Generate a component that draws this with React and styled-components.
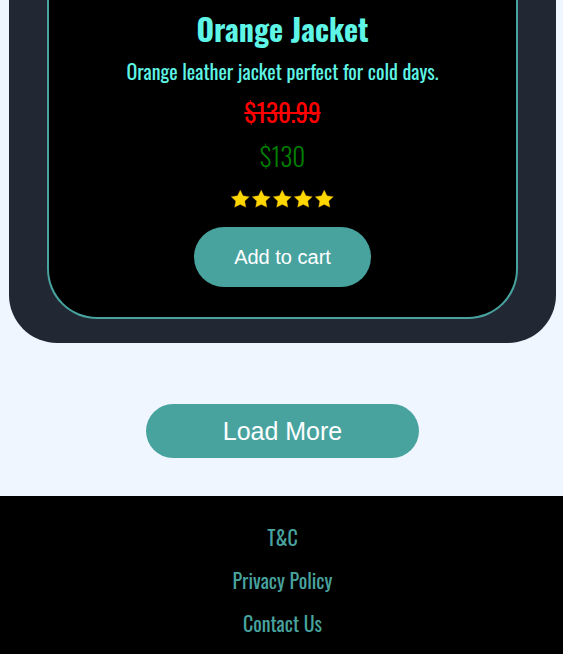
import React from "react";
import styled, { createGlobalStyle } from "styled-components";

const GlobalStyle = createGlobalStyle`
  body {
    margin: 0;
    background: #eff6ff;
    font-family: "Liberation Sans", Arial, sans-serif;
  }
`;

const condensed = `"Oswald", "Liberation Sans Narrow", "DejaVu Sans Condensed", sans-serif`;

const Page = styled.div`
  display: flex;
  flex-direction: column;
  min-height: 654px;
`;

const Shelf = styled.section`
  margin: 0 7px 0 9px;
  padding: 0 38px 24px;
  background: #212833;
  border-radius: 0 0 48px 48px;
`;

const Card = styled.article`
  display: flex;
  flex-direction: column;
  align-items: center;
  background: #000;
  border: 2px solid #48a39f;
  border-top: none;
  border-radius: 0 0 50px 50px;
  padding: 7px 0 30px;
  font-family: ${condensed};
`;

const Title = styled.h2`
  margin: 0;
  font-size: 30px;
  line-height: 44px;
  font-weight: 700;
  color: #5ef5e6;
`;

const Desc = styled.p`
  margin: 5px 0 0;
  font-size: 20px;
  line-height: 30px;
  color: #5ef5e6;
`;

const Price = styled.div`
  margin-top: ${(p) => p.$gap}px;
  font-size: 25px;
  line-height: 37px;
  font-weight: ${(p) => (p.$old ? 400 : 300)};
  color: ${(p) => p.$color};
  text-decoration: ${(p) => (p.$old ? "line-through" : "none")};
`;

const Stars = styled.div`
  margin-top: 12px;
  height: 26px;
  display: flex;
  align-items: center;
  gap: 2.5px;
`;

const Star = styled.svg`
  width: 18.5px;
  height: 17.6px;
  fill: #ffd700;
  stroke: #b8860b;
  stroke-width: 0.4;
`;

const PillButton = styled.button`
  border: none;
  border-radius: 999px;
  background: #48a39f;
  color: #fff;
  font-family: "Liberation Sans", Arial, sans-serif;
  font-size: ${(p) => p.$size}px;
  width: ${(p) => p.$w}px;
  height: ${(p) => p.$h}px;
  cursor: pointer;
`;

const CartButton = styled(PillButton)`
  margin-top: 15px;
`;

const MoreRow = styled.div`
  display: flex;
  justify-content: center;
  padding: 61px 0 38px 2px;
`;

const Footer = styled.footer`
  flex: 1;
  background: #000;
  display: flex;
  flex-direction: column;
  align-items: center;
  gap: 13px;
  padding: 26px 0 20px 2px;
`;

const FooterLink = styled.a`
  font-family: ${condensed};
  font-size: 20px;
  line-height: 30px;
  color: #48a39f;
  text-decoration: none;
`;

const StarIcon = () => (
  <Star viewBox="2 2 20 19.3">
    <polygon points="12,2 15.09,8.26 22,9.27 17,14.14 18.18,21.02 12,17.77 5.82,21.02 7,14.14 2,9.27 8.91,8.26" />
  </Star>
);

export default function App() {
  return (
    <Page>
      <GlobalStyle />
      <Shelf>
        <Card>
          <Title>Orange Jacket</Title>
          <Desc>Orange leather jacket perfect for cold days.</Desc>
          <Price $old $color="#ff0000" $gap={7}>$130.99</Price>
          <Price $color="#008000" $gap={7}>$130</Price>
          <Stars>
            {[0, 1, 2, 3, 4].map((i) => (
              <StarIcon key={i} />
            ))}
          </Stars>
          <CartButton $w={177} $h={60} $size={20}>Add to cart</CartButton>
        </Card>
      </Shelf>
      <MoreRow>
        <PillButton $w={273} $h={54} $size={25}>Load More</PillButton>
      </MoreRow>
      <Footer>
        <FooterLink href="#">T&amp;C</FooterLink>
        <FooterLink href="#">Privacy Policy</FooterLink>
        <FooterLink href="#">Contact Us</FooterLink>
      </Footer>
    </Page>
  );
}
